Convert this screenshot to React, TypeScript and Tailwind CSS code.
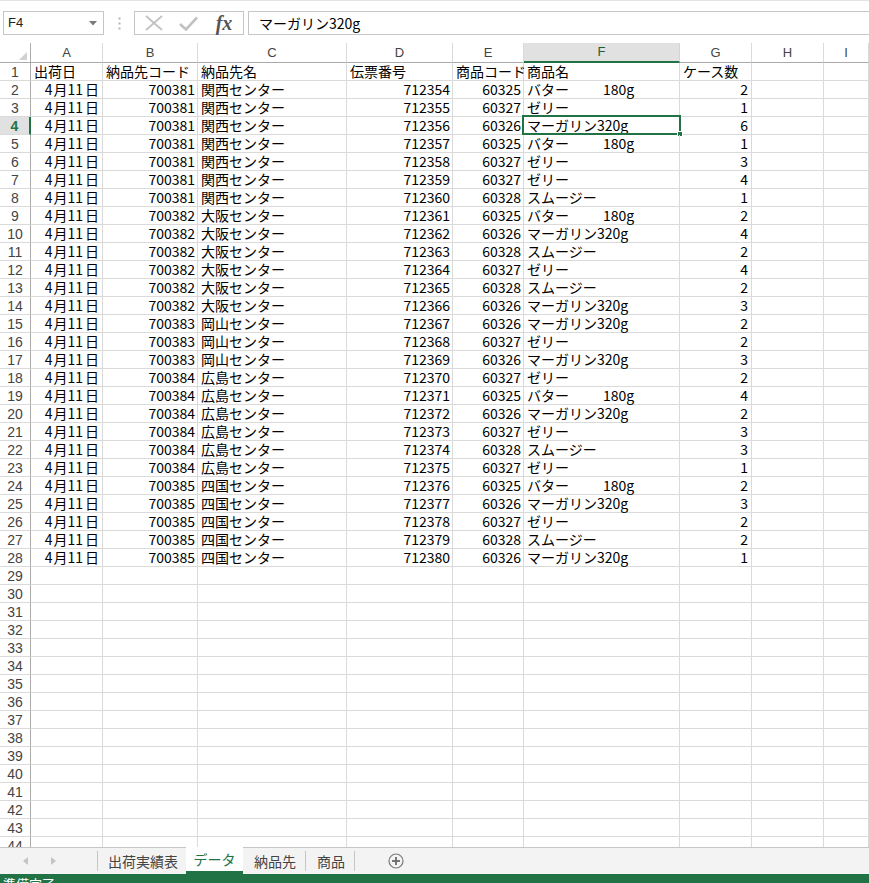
import React from "react";

const PRODUCTS: Record<string, string> = {
  "60325": "バター180g",
  "60326": "マーガリン320g",
  "60327": "ゼリー",
  "60328": "スムージー",
};

const CENTERS: Record<string, string> = {
  "700381": "関西センター",
  "700382": "大阪センター",
  "700383": "岡山センター",
  "700384": "広島センター",
  "700385": "四国センター",
};

// [納品先コード, 商品コード, ケース数]
const RAW: [string, string, number][] = [
  ["700381", "60325", 2],
  ["700381", "60327", 1],
  ["700381", "60326", 6],
  ["700381", "60325", 1],
  ["700381", "60327", 3],
  ["700381", "60327", 4],
  ["700381", "60328", 1],
  ["700382", "60325", 2],
  ["700382", "60326", 4],
  ["700382", "60328", 2],
  ["700382", "60327", 4],
  ["700382", "60328", 2],
  ["700382", "60326", 3],
  ["700383", "60326", 2],
  ["700383", "60327", 2],
  ["700383", "60326", 3],
  ["700384", "60327", 2],
  ["700384", "60325", 4],
  ["700384", "60326", 2],
  ["700384", "60327", 3],
  ["700384", "60328", 3],
  ["700384", "60327", 1],
  ["700385", "60325", 2],
  ["700385", "60326", 3],
  ["700385", "60327", 2],
  ["700385", "60328", 2],
  ["700385", "60326", 1],
];

const COLS = ["A", "B", "C", "D", "E", "F", "G", "H", "I"];
const TOTAL_ROWS = 44;

const cellBase =
  "h-[18px] border-r border-b border-[#dadada] text-[14px] leading-[17px] text-black whitespace-nowrap overflow-visible";

function ProductName({ name }: { name: string }) {
  if (name === "バター180g") {
    return (
      <>
        <span className="inline-block w-[76px]">バター</span>
        <span>180g</span>
      </>
    );
  }
  return <>{name}</>;
}

function DataRow({ idx }: { idx: number }) {
  const rowNum = idx + 1;
  const selectedRow = rowNum === 4;
  const header = (
    <div
      className={
        "h-[18px] border-b border-[#dadada] flex items-center justify-center text-[14px] pt-px " +
        (selectedRow
          ? "bg-[#e1e1e1] border-r-2 border-r-[#217346] text-[#217346] font-semibold"
          : "bg-white border-r border-r-[#ababab] text-[#444]")
      }
      style={{ fontFamily: '"Liberation Sans", Arial, sans-serif' }}
    >
      {rowNum}
    </div>
  );

  let cells: React.ReactNode[] = [];
  if (rowNum === 1) {
    const heads = ["出荷日", "納品先コード", "納品先名", "伝票番号", "商品コード", "商品名", "ケース数", "", ""];
    cells = heads.map((h, i) => (
      <div key={i} className={cellBase + " pl-[3px]"}>
        {h}
      </div>
    ));
  } else if (rowNum <= 28) {
    const [code, pcode, qty] = RAW[rowNum - 2];
    const slip = String(712354 + rowNum - 2);
    cells = [
      <div key="a" className={cellBase + " text-right pr-[3px]"}>
        4<span className="ml-[1px]">月</span>11<span className="ml-[2px]">日</span>
      </div>,
      <div key="b" className={cellBase + " text-right pr-[2px]"}>{code}</div>,
      <div key="c" className={cellBase + " pl-[3px]"}>{CENTERS[code]}</div>,
      <div key="d" className={cellBase + " text-right pr-[2px]"}>{slip}</div>,
      <div key="e" className={cellBase + " text-right pr-[2px]"}>{pcode}</div>,
      <div key="f" className={cellBase + " pl-[3px] relative"}>
        <ProductName name={PRODUCTS[pcode]} />
        {selectedRow && (
          <>
            <div className="absolute left-[-2px] top-[-2px] right-[-2px] bottom-[-1px] border-2 border-[#217346] pointer-events-none" />
            <div className="absolute right-[-4px] bottom-[-3px] w-[6px] h-[6px] bg-[#217346] border border-white" />
          </>
        )}
      </div>,
      <div key="g" className={cellBase + " text-right pr-[3px]"}>{qty}</div>,
      <div key="h" className={cellBase}></div>,
      <div key="i" className={cellBase}></div>,
    ];
  } else {
    cells = COLS.map((c) => <div key={c} className={cellBase}></div>);
  }

  return (
    <>
      {header}
      {cells}
    </>
  );
}

export default function App() {
  const jp = '"Noto Sans CJK JP", "Noto Sans", sans-serif';
  return (
    <div
      className="w-[869px] h-[883px] bg-white flex flex-col overflow-hidden"
      style={{ fontFamily: jp }}
    >
      {/* top strip */}
      <div className="h-[11px] border-t border-[#e3e3e3] bg-white shrink-0" />

      {/* formula bar */}
      <div className="h-[24px] flex items-stretch shrink-0">
        <div className="ml-[3px] w-[101px] border border-[#c6c6c6] flex items-center justify-between pl-[4px] pr-[6px]">
          <span
            className="text-[13px] text-[#222]"
            style={{ fontFamily: '"Liberation Sans", Arial, sans-serif' }}
          >
            F4
          </span>
          <svg width="8" height="5" viewBox="0 0 8 5">
            <polygon points="0,0 8,0 4,4.5" fill="#7a7a7a" />
          </svg>
        </div>
        <div className="w-[30px] flex items-center justify-center">
          <svg width="3" height="13" viewBox="0 0 3 13">
            <rect x="0.5" y="0.5" width="2" height="2" fill="#b5b5b5" />
            <rect x="0.5" y="5.5" width="2" height="2" fill="#b5b5b5" />
            <rect x="0.5" y="10.5" width="2" height="2" fill="#b5b5b5" />
          </svg>
        </div>
        <div className="w-[110px] border border-[#c6c6c6] flex items-center">
          <div className="w-[36px] flex justify-center pl-[2px]">
            <svg width="18" height="16" viewBox="0 0 18 16">
              <line x1="1" y1="1" x2="17" y2="15" stroke="#c2c2c2" strokeWidth="1.8" />
              <line x1="17" y1="1" x2="1" y2="15" stroke="#c2c2c2" strokeWidth="1.8" />
            </svg>
          </div>
          <div className="w-[34px] flex justify-center">
            <svg width="19" height="15" viewBox="0 0 19 15">
              <polyline points="1,8 7,13.5 18,1.5" fill="none" stroke="#c2c2c2" strokeWidth="2.6" />
            </svg>
          </div>
          <div
            className="flex-1 flex justify-center text-[20px] leading-[20px] italic font-bold text-[#555]"
            style={{ fontFamily: '"Liberation Serif", "Times New Roman", serif' }}
          >
            fx
          </div>
        </div>
        <div className="ml-[4px] flex-1 border-y border-l border-[#c6c6c6] flex items-center pl-[10px] text-[14px] text-black">
          マーガリン320g
        </div>
      </div>

      {/* spacer */}
      <div className="h-[8px] shrink-0" />

      {/* grid */}
      <div className="flex-1 overflow-hidden min-h-0">
        <div className="grid grid-cols-[31px_72px_95px_149px_106px_71px_156px_72px_72px_1fr]">
          {/* header row */}
          <div className="h-[20px] border-r border-b border-[#ababab] bg-white flex items-end justify-end pr-[3px] pb-[2px]">
            <svg width="8" height="8" viewBox="0 0 8 8">
              <polygon points="8,0 8,8 0,8" fill="#d0d0d0" />
            </svg>
          </div>
          {COLS.map((c) => {
            const sel = c === "F";
            return (
              <div
                key={c}
                className={
                  "h-[20px] flex items-center justify-center text-[13px] border-r " +
                  (sel
                    ? "bg-[#e1e1e1] border-r-[#d4d4d4] border-b-2 border-b-[#217346] text-[#1d5c37]"
                    : "bg-white border-r-[#dadada] border-b border-b-[#ababab] text-[#444]")
                }
                style={{ fontFamily: '"Liberation Sans", Arial, sans-serif' }}
              >
                {c}
              </div>
            );
          })}
          {Array.from({ length: TOTAL_ROWS }).map((_, i) => (
            <DataRow key={i} idx={i} />
          ))}
        </div>
      </div>

      {/* sheet tabs */}
      <div className="h-[27px] shrink-0 bg-[#f3f3f3] border-t border-[#c6c6c6] flex items-stretch text-[14px] text-[#444]">
        <div className="w-[97px] flex items-center">
          <svg className="ml-[23px]" width="5" height="8" viewBox="0 0 5 8">
            <polygon points="5,0 5,8 0,4" fill="#c4c4c4" />
          </svg>
          <svg className="ml-[23px]" width="5" height="8" viewBox="0 0 5 8">
            <polygon points="0,0 0,8 5,4" fill="#c4c4c4" />
          </svg>
        </div>
        <div className="w-px bg-[#c6c6c6] my-[3px]" />
        <div className="w-[88px] flex items-center pl-[10px]">出荷実績表</div>
        <div className="w-[57px] bg-white border-b-[3px] border-[#217346] flex items-center justify-center text-[#217346] -mt-px">
          データ
        </div>
        <div className="w-[62px] flex items-center pl-[11px]">納品先</div>
        <div className="w-px bg-[#c6c6c6] my-[3px]" />
        <div className="w-[48px] flex items-center pl-[11px]">商品</div>
        <div className="w-px bg-[#c6c6c6] my-[3px]" />
        <div className="flex items-center pl-[33px]">
          <svg width="16" height="16" viewBox="0 0 16 16">
            <circle cx="8" cy="8" r="7" fill="none" stroke="#7a7a7a" strokeWidth="1.2" />
            <line x1="4" y1="8" x2="12" y2="8" stroke="#6a6a6a" strokeWidth="1.8" />
            <line x1="8" y1="4" x2="8" y2="12" stroke="#6a6a6a" strokeWidth="1.8" />
          </svg>
        </div>
      </div>

      {/* status bar */}
      <div className="h-[9px] shrink-0 bg-[#217346] overflow-hidden">
        <div className="pl-[3px] pt-[2px] text-[13px] leading-[16px] text-white">準備完了</div>
      </div>
    </div>
  );
}
